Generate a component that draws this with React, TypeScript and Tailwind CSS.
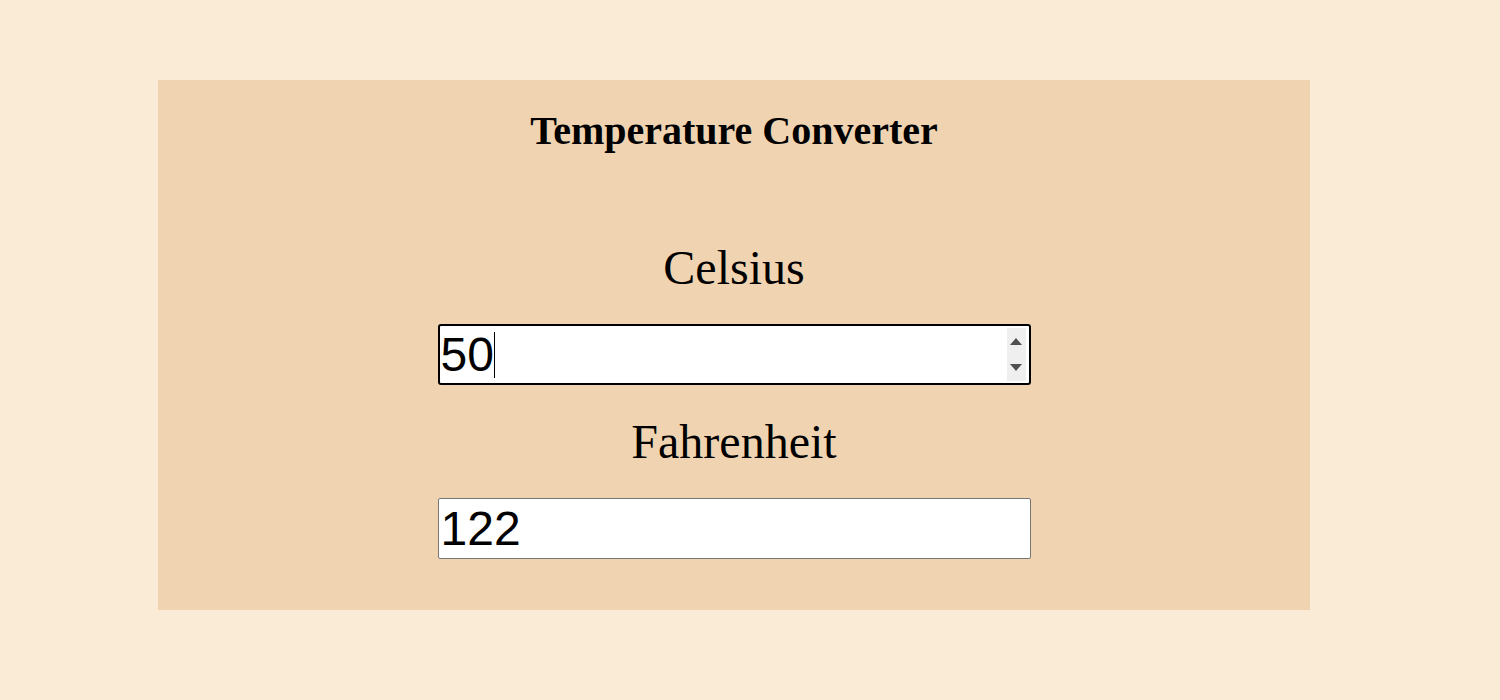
import { useState } from 'react';

export default function App() {
  const [celsius] = useState('50');
  const fahrenheit = String((Number(celsius) * 9) / 5 + 32);

  return (
    <div className="min-h-[700px] w-full bg-[#faebd7] pt-[80px] font-['Liberation_Serif',serif] text-black">
      <div className="ml-[158px] flex w-[1152px] flex-col items-center bg-[#f0d4b1] pt-[28px] pb-[51px]">
        <h1 className="text-[40px] leading-[46px] font-bold">Temperature Converter</h1>

        {/* Celsius */}
        <label className="mt-[86px] text-[48px] leading-[55px]">Celsius</label>
        <div className="mt-[29px] flex h-[61px] w-[593px] items-center rounded-[3px] border-2 border-black bg-white pl-[1px] pr-[3px] font-['Liberation_Sans',Arial,sans-serif] text-[48px] leading-[55px]">
          <span>{celsius}</span>
          <span className="h-[46px] w-px bg-black" />
          <div className="flex-1" />
          <div className="flex h-[53px] w-[19px] flex-col items-center justify-around bg-[#efefef]">
            <svg width="12" height="7" viewBox="0 0 12 7">
              <path d="M0 7 L6 0 L12 7 Z" fill="#505050" />
            </svg>
            <svg width="12" height="7" viewBox="0 0 12 7">
              <path d="M0 0 L12 0 L6 7 Z" fill="#505050" />
            </svg>
          </div>
        </div>

        {/* Fahrenheit */}
        <label className="mt-[29px] text-[48px] leading-[55px]">Fahrenheit</label>
        <input
          type="text"
          readOnly
          value={fahrenheit}
          className="mt-[29px] h-[61px] w-[593px] rounded-[2px] border border-[#767676] bg-white px-[2px] font-['Liberation_Sans',Arial,sans-serif] text-[48px] leading-[55px] outline-none"
        />
      </div>
    </div>
  );
}
